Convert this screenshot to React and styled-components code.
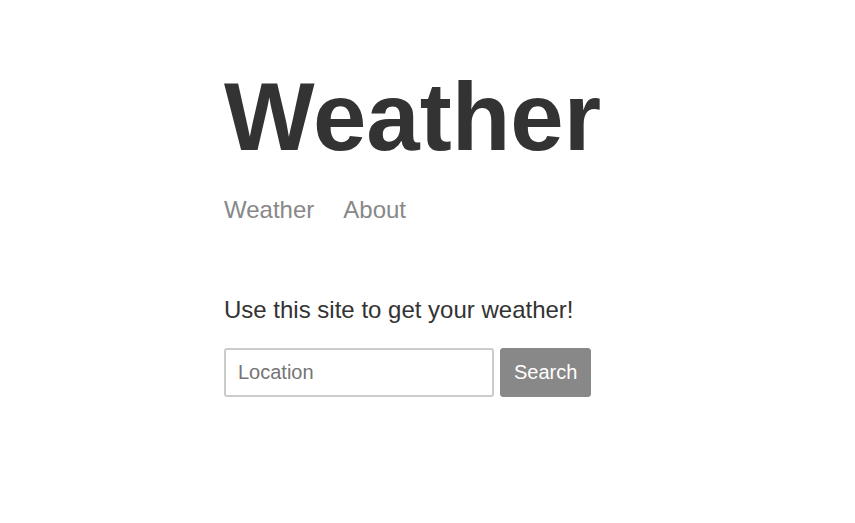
import styled, { createGlobalStyle } from "styled-components";

const GlobalStyle = createGlobalStyle`
  body {
    margin: 0;
    font-family: "Liberation Sans", Arial, sans-serif;
    color: #333333;
    background: #ffffff;
  }
`;

const Main = styled.div`
  max-width: 407px;
  margin: 0 auto;
  padding-top: 62px;
`;

const Header = styled.header`
  margin-bottom: 72px;
`;

const Title = styled.h1`
  margin: 0 0 24px 0;
  font-size: 96px;
  font-weight: bold;
  line-height: normal;
  color: #333333;
`;

const Nav = styled.nav`
  display: flex;
  gap: 29px;
`;

const NavItem = styled.a`
  font-size: 24px;
  color: #888888;
  text-decoration: none;
  cursor: pointer;
`;

const Intro = styled.p`
  margin: 0 0 24px 0;
  font-size: 24px;
  color: #333333;
`;

const SearchForm = styled.form`
  display: flex;
  gap: 6px;
`;

const LocationInput = styled.input`
  box-sizing: border-box;
  width: 270px;
  height: 49px;
  padding: 0 12px;
  font-family: "Liberation Sans", Arial, sans-serif;
  font-size: 20px;
  border: 2px solid #cccccc;
  border-radius: 3px;
  color: #333333;
  outline: none;

  &::placeholder {
    color: #757575;
  }
`;

const SearchButton = styled.button`
  box-sizing: border-box;
  height: 49px;
  padding: 0 13px;
  font-family: "Liberation Sans", Arial, sans-serif;
  font-size: 20px;
  color: #ffffff;
  background: #888888;
  border: 1px solid #888888;
  border-radius: 3px;
  cursor: pointer;
`;

function App() {
  return (
    <>
      <GlobalStyle />
      <Main>
        <Header>
          <Title>Weather</Title>
          <Nav>
            <NavItem href="#">Weather</NavItem>
            <NavItem href="#">About</NavItem>
          </Nav>
        </Header>
        <Intro>Use this site to get your weather!</Intro>
        <SearchForm onSubmit={(e) => e.preventDefault()}>
          <LocationInput placeholder="Location" />
          <SearchButton type="submit">Search</SearchButton>
        </SearchForm>
      </Main>
    </>
  );
}

export default App;
